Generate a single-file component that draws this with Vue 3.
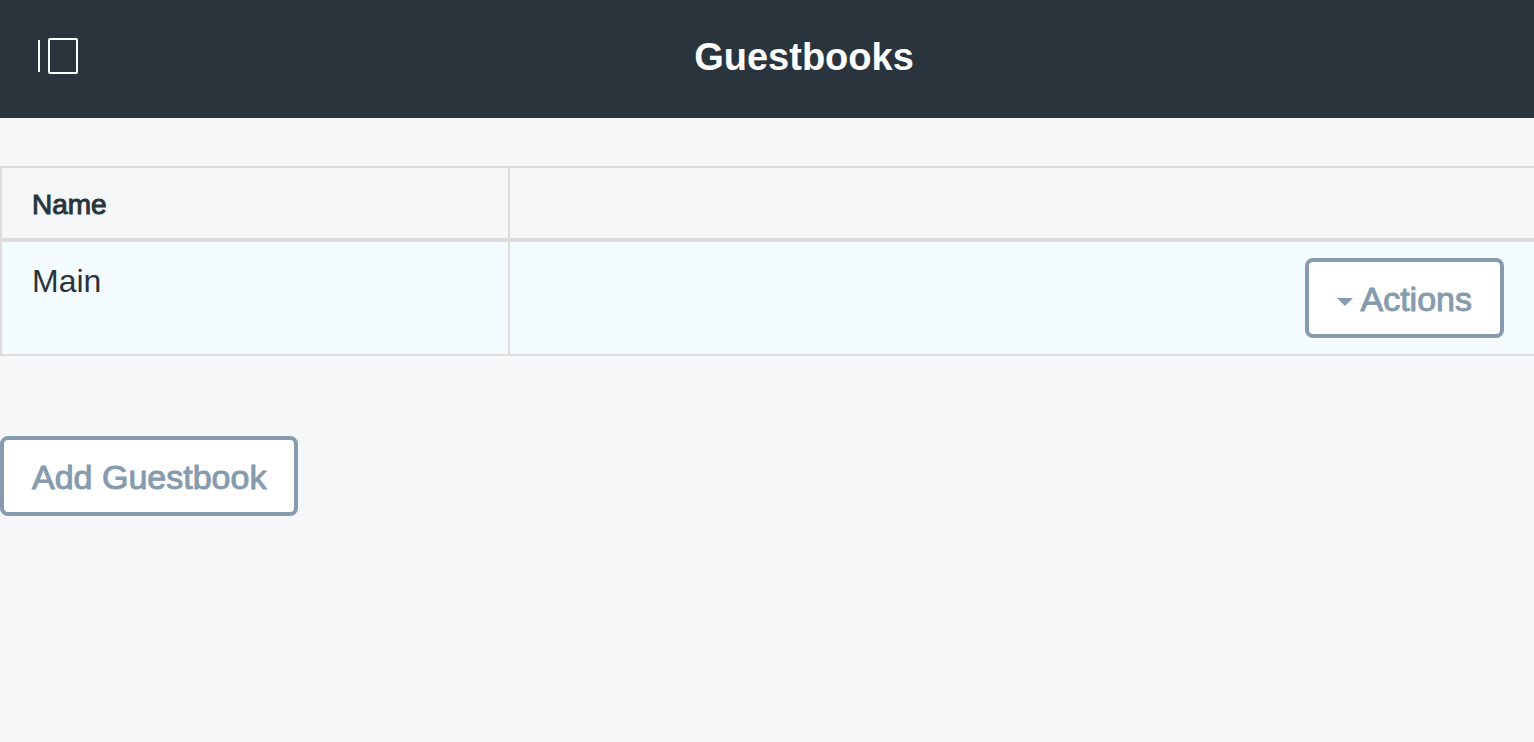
<script setup>
const guestbooks = [{ id: 1, name: 'Main' }]
</script>

<template>
  <div class="page">
    <header class="topbar">
      <button class="menu-toggle" type="button" aria-label="Toggle menu">
        <svg width="40" height="36" viewBox="0 0 40 36" fill="none" stroke="#fff" stroke-width="2" aria-hidden="true">
          <path d="M1 2v32" />
          <rect x="11" y="1" width="28" height="34" rx="1" />
        </svg>
      </button>
      <h1 class="title">Guestbooks</h1>
    </header>

    <main class="content">
      <table class="listing">
        <thead>
          <tr>
            <th class="name-col" scope="col">Name</th>
            <td></td>
          </tr>
        </thead>
        <tbody>
          <tr v-for="book in guestbooks" :key="book.id">
            <td class="name-col">{{ book.name }}</td>
            <td class="actions-col">
              <button class="btn" type="button" aria-haspopup="true">
                <svg class="caret" width="16" height="8" viewBox="0 0 16 8" aria-hidden="true">
                  <path d="M0 0h16L8 8z" fill="currentColor" />
                </svg>
                <span>Actions</span>
              </button>
            </td>
          </tr>
        </tbody>
      </table>

      <button class="btn" type="button">Add Guestbook</button>
    </main>
  </div>
</template>

<style>
body {
  margin: 0;
  background: #f5f7f9;
}
</style>

<style scoped>
.page {
  min-height: 100vh;
  background: #f5f7f9;
  color: #2a343d;
  font-family: "Liberation Sans", Arial, sans-serif;
}

.topbar {
  display: flex;
  align-items: center;
  box-sizing: border-box;
  height: 118px;
  padding-bottom: 6px;
  background: #2a343d;
}

.menu-toggle {
  display: flex;
  flex: none;
  justify-content: flex-end;
  box-sizing: border-box;
  width: 78px;
  padding: 0;
  border: 0;
  background: none;
  cursor: pointer;
}

.title {
  flex: 1;
  margin: 0;
  padding: 2px 4px 0 0;
  color: #fff;
  font-size: 38px;
  font-weight: 700;
  line-height: 44px;
  text-align: center;
}

.content {
  padding-top: 48px;
}

.listing {
  width: 100%;
  margin-bottom: 80px;
  border: solid #dcdcdc;
  border-width: 2px 0 0 2px;
  border-spacing: 0;
  table-layout: fixed;
}

.listing th,
.listing td {
  box-sizing: border-box;
  padding: 16px 30px;
  border-bottom: 2px solid #dcdcdc;
  text-align: left;
  vertical-align: top;
}

.listing .name-col {
  width: 33.16%;
  border-right: 2px solid #dcdcdc;
}

.listing thead th,
.listing thead td {
  padding-top: 18px;
  padding-bottom: 14px;
  border-bottom-width: 4px;
  font-size: 28px;
  font-weight: 400;
  line-height: 38px;
  -webkit-text-stroke: 1px currentColor;
}

.listing tbody td {
  background: #f3fbff;
  font-size: 32px;
  line-height: 46px;
}

.listing tbody .actions-col {
  text-align: right;
}

.btn {
  display: inline-flex;
  align-items: center;
  gap: 8px;
  box-sizing: border-box;
  height: 80px;
  padding: 2px 28px 0;
  border: 4px solid #869bad;
  border-radius: 8px;
  background: #fff;
  color: #869bad;
  font-family: inherit;
  font-size: 34px;
  line-height: 40px;
  vertical-align: top;
  -webkit-text-stroke: 1px currentColor;
  cursor: pointer;
}

.caret {
  flex: none;
  margin-top: 6px;
}
</style>
